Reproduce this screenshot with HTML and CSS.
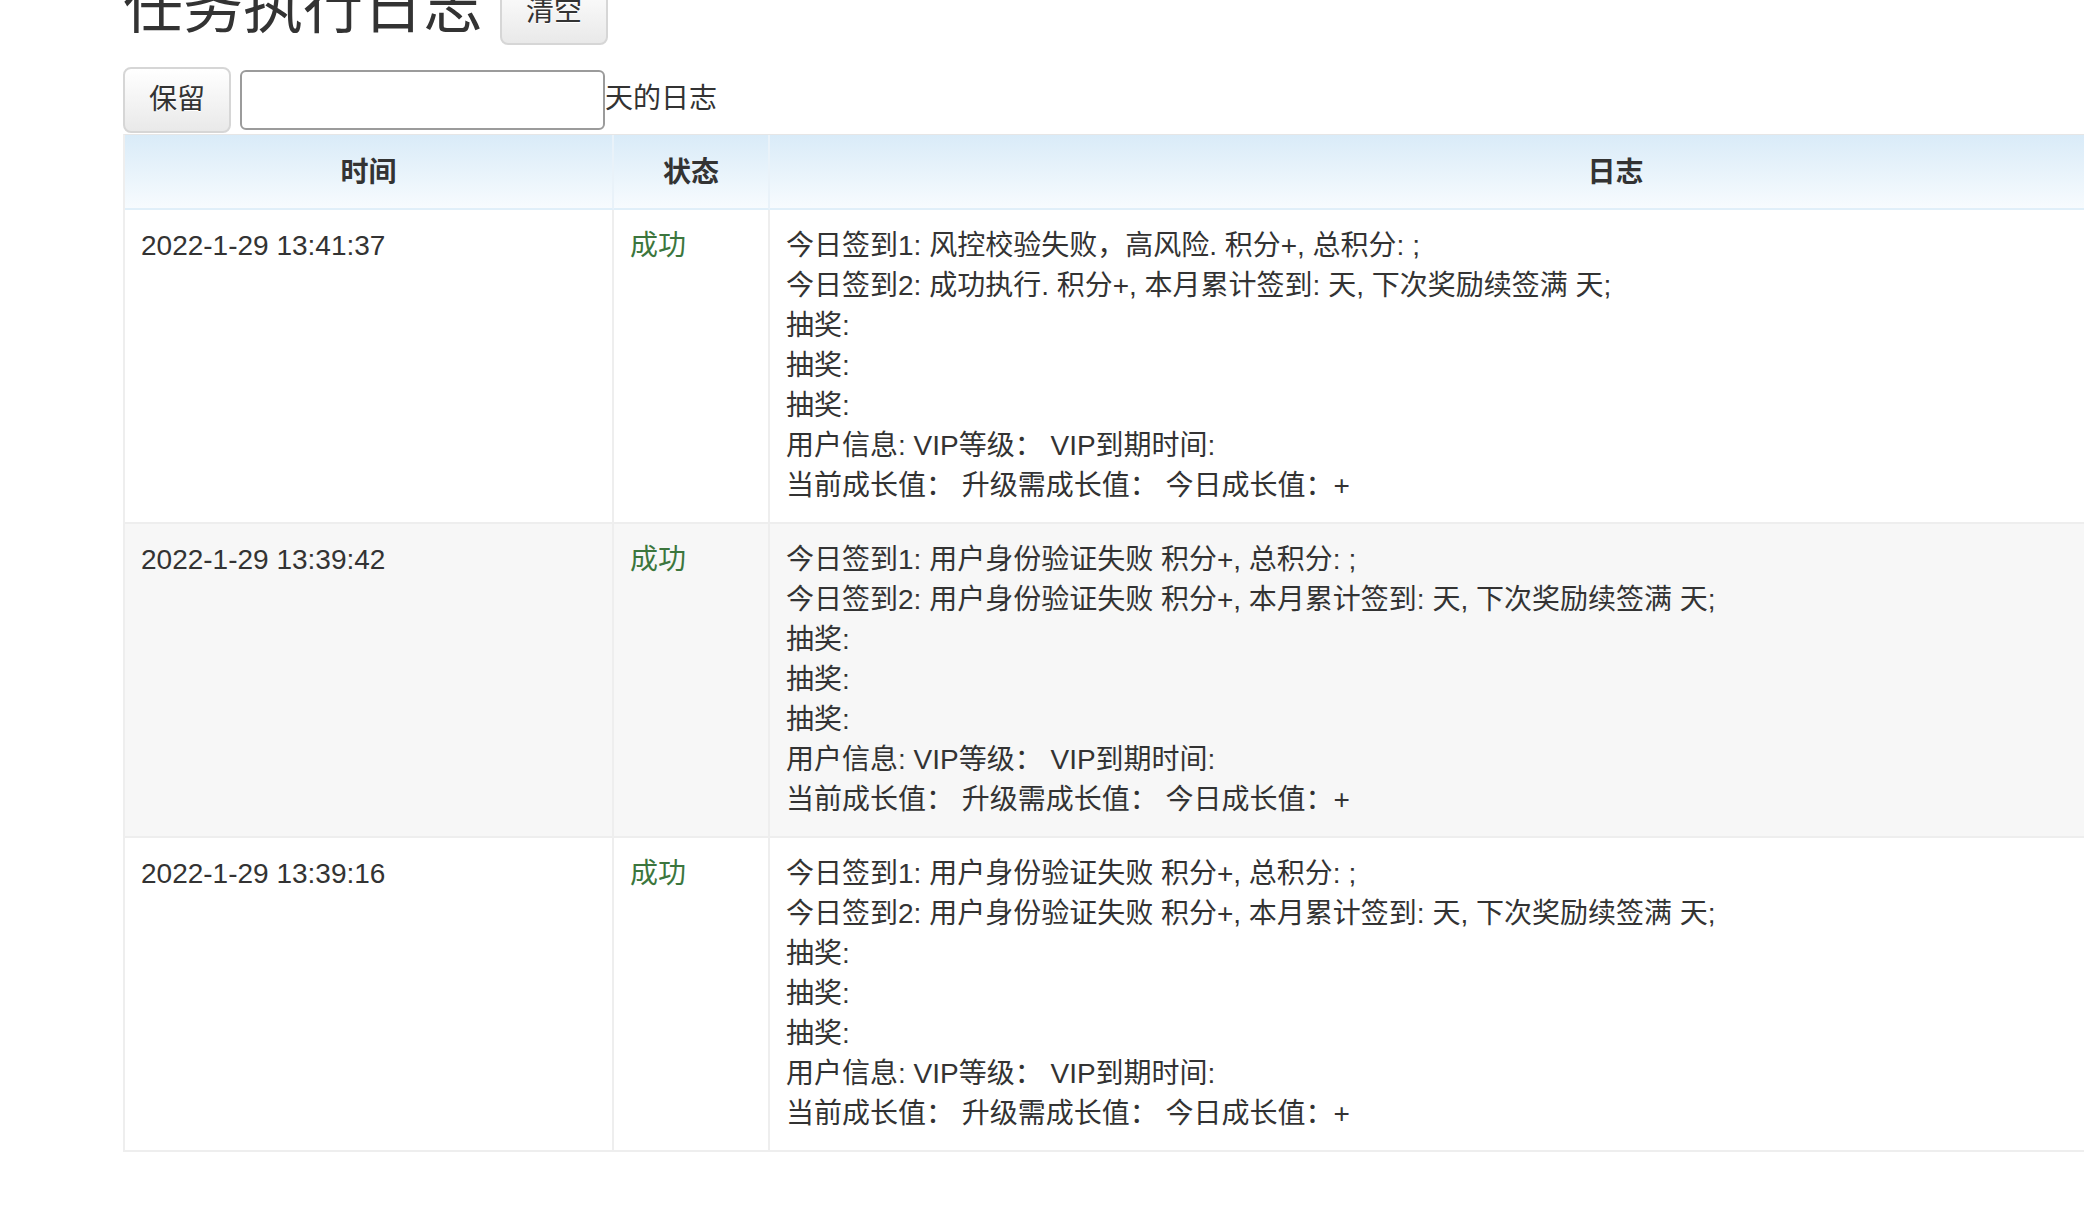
FILE: index.html
```html
<!DOCTYPE html>
<html lang="zh-CN">
<head>
<meta charset="utf-8">
<title>任务执行日志</title>
<link rel="stylesheet" href="styles.css">
</head>
<body>
<div class="page">
  <div class="title-row">
    <h2 class="title">任务执行日志</h2>
    <button class="btn">清空</button>
  </div>
  <div class="retain-row">
    <button class="btn">保留</button>
    <input class="days" type="text">
    <span class="days-label">天的日志</span>
  </div>
  <table class="log-table">
    <thead>
      <tr>
        <th class="c-time">时间</th>
        <th class="c-status">状态</th>
        <th class="c-log">日志</th>
      </tr>
    </thead>
    <tbody>
      <tr>
        <td>2022-1-29 13:41:37</td>
        <td class="ok">成功</td>
        <td>
          <div>今日签到1: 风控校验失败，高风险. 积分+, 总积分: ;</div>
          <div>今日签到2: 成功执行. 积分+, 本月累计签到: 天, 下次奖励续签满 天;</div>
          <div>抽奖:</div>
          <div>抽奖:</div>
          <div>抽奖:</div>
          <div>用户信息: VIP等级：&nbsp;VIP到期时间:</div>
          <div>当前成长值：&nbsp;升级需成长值：&nbsp;今日成长值：+</div>
        </td>
      </tr>
      <tr class="alt">
        <td>2022-1-29 13:39:42</td>
        <td class="ok">成功</td>
        <td>
          <div>今日签到1: 用户身份验证失败 积分+, 总积分: ;</div>
          <div>今日签到2: 用户身份验证失败 积分+, 本月累计签到: 天, 下次奖励续签满 天;</div>
          <div>抽奖:</div>
          <div>抽奖:</div>
          <div>抽奖:</div>
          <div>用户信息: VIP等级：&nbsp;VIP到期时间:</div>
          <div>当前成长值：&nbsp;升级需成长值：&nbsp;今日成长值：+</div>
        </td>
      </tr>
      <tr>
        <td>2022-1-29 13:39:16</td>
        <td class="ok">成功</td>
        <td>
          <div>今日签到1: 用户身份验证失败 积分+, 总积分: ;</div>
          <div>今日签到2: 用户身份验证失败 积分+, 本月累计签到: 天, 下次奖励续签满 天;</div>
          <div>抽奖:</div>
          <div>抽奖:</div>
          <div>抽奖:</div>
          <div>用户信息: VIP等级：&nbsp;VIP到期时间:</div>
          <div>当前成长值：&nbsp;升级需成长值：&nbsp;今日成长值：+</div>
        </td>
      </tr>
    </tbody>
  </table>
</div>
</body>
</html>
```

FILE: styles.css
```css
html, body {
  overflow: hidden;
}
body {
  margin: 0;
  background: #fff;
  color: #333;
  font-family: "Liberation Sans", "Noto Sans CJK SC", sans-serif;
  font-size: 28px;
  line-height: 40px;
}
.page {
  width: 2340px;
  padding-left: 123px;
}
.title-row {
  display: flex;
  align-items: center;
  gap: 17px;
  height: 66px;
  margin-top: -21px;
}
.title {
  margin: 0;
  font-size: 60px;
  line-height: 66px;
  font-weight: 400;
  color: #333;
  position: relative;
  top: -4px;
}
.btn {
  box-sizing: border-box;
  height: 66px;
  font-family: inherit;
  font-size: 28px;
  line-height: 40px;
  padding: 11px 24px;
  border: 2px solid #d6d6d6;
  border-radius: 8px;
  color: #333;
  background: linear-gradient(to bottom, #ffffff 0%, #e9e9e9 100%);
  text-shadow: 0 1px 0 #fff;
}
.retain-row {
  display: flex;
  align-items: center;
  height: 66px;
  margin-top: 22px;
}
.days {
  box-sizing: border-box;
  width: 365px;
  height: 60px;
  margin-left: 9px;
  border: 2px solid #9b9b9b;
  border-radius: 6px;
  background: #fff;
  font-size: 28px;
}
.days-label {
  margin-left: 0;
  margin-top: -2px;
}
.log-table {
  margin-top: 1px;
  width: 2340px;
  table-layout: fixed;
  border-collapse: separate;
  border-spacing: 0;
  border-left: 2px solid #eeeeee;
  border-top: 1px solid #e6e6e6;
}
.log-table th,
.log-table td {
  box-sizing: border-box;
  padding: 16px;
  vertical-align: top;
  text-align: left;
  border-right: 2px solid #eeeeee;
  border-bottom: 2px solid #eeeeee;
}
.log-table th {
  text-align: center;
  font-weight: 700;
  background: linear-gradient(to bottom, #d9ebf8 0%, #f7fbfe 100%);
  border-right: 2px solid #e9f2f9;
  border-bottom: 2px solid #e0eff9;
  padding-top: 18px;
  padding-bottom: 15px;
}
.c-time { width: 489px; }
.c-status { width: 156px; }
.c-log { width: 1693px; }
.alt td {
  background: #f7f7f7;
}
.ok {
  color: #3c763d;
}
```
